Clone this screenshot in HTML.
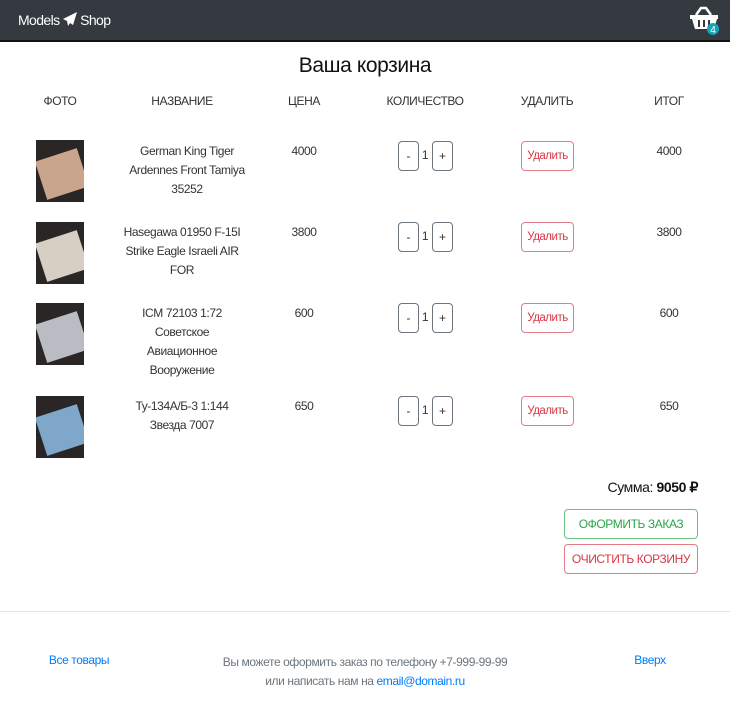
<!DOCTYPE html>
<html><head><meta charset="utf-8"><style>
*{margin:0;padding:0;box-sizing:border-box}
body{width:730px;height:710px;background:#fff;font-family:"Liberation Sans",sans-serif;color:#333;position:relative;overflow:hidden}
.nav{position:absolute;left:0;top:0;width:730px;height:42px;background:#343a40;border-bottom:2px solid #111}
.a{position:absolute;white-space:nowrap}
.c{transform:translateX(-50%);text-align:center}
.n{font-size:12px;letter-spacing:-0.4px}
.img{position:absolute;left:36px;width:48px;height:62px;background:#2a2626;overflow:hidden}
.img i{position:absolute;left:4px;top:14px;width:44px;height:40px;transform:rotate(-18deg);}
.qb{position:absolute;width:21px;height:30px;border:1px solid #6c757d;border-radius:4px;font-size:12px;text-align:center;line-height:28px}
.del{position:absolute;left:521px;width:53px;height:30px;border:1px solid #e07d87;border-radius:4px;color:#dc3545;font-size:11.5px;text-align:center;line-height:28px;letter-spacing:-0.5px}
.big{position:absolute;left:564px;width:134px;height:30px;border:1px solid;border-radius:4px;font-size:12px;text-align:center;line-height:28px;letter-spacing:-0.4px}
</style></head><body>
<div class="nav"></div>
<div class="a" style="left:18px;top:12px;color:#fff;font-size:14px;letter-spacing:-0.6px">Models <svg width="14" height="14" viewBox="0 0 14 14" style="vertical-align:-1px"><path d="M14 0L0 7l4 2 1 5 2-3 3 2z" fill="#fff"/></svg> Shop</div>
<svg class="a" style="left:689px;top:4px" width="32" height="32" viewBox="0 0 32 32"><path d="M7 11l5-7h5l5 7" stroke="#fff" stroke-width="2.5" fill="none"/><path d="M1 11h28v4h-1l-3 10H6L3 15H1z" fill="#fff"/><path d="M10 16v7M15 16v7M20 16v7" stroke="#343a40" stroke-width="2"/><circle cx="24" cy="25" r="6" fill="#17a2b8"/><text x="24" y="29" fill="#fff" font-size="10" text-anchor="middle" font-family="Liberation Sans">4</text></svg>
<div class="a c" style="left:365px;top:54px;font-size:21px;letter-spacing:-0.4px;color:#111">Ваша корзина</div>
<div class="a c n" style="left:60px;top:94px">ФОТО</div>
<div class="a c n" style="left:182px;top:94px">НАЗВАНИЕ</div>
<div class="a c n" style="left:304px;top:94px">ЦЕНА</div>
<div class="a c n" style="left:425px;top:94px">КОЛИЧЕСТВО</div>
<div class="a c n" style="left:547px;top:94px">УДАЛИТЬ</div>
<div class="a c n" style="left:669px;top:94px">ИТОГ</div>

<div class="img" style="top:140px"><i style="background:#c9a58e"></i></div>
<div class="img" style="top:222px"><i style="background:#d8cfc4"></i></div>
<div class="img" style="top:303px"><i style="background:#b9bcc2"></i></div>
<div class="img" style="top:396px"><i style="background:#7fa7c9"></i></div>

<div class="a c n" style="left:187px;top:142px;line-height:19px">German King Tiger<br>Ardennes Front Tamiya<br>35252</div>
<div class="a c n" style="left:182px;top:223px;line-height:19px">Hasegawa 01950 F-15I<br>Strike Eagle Israeli AIR<br>FOR</div>
<div class="a c n" style="left:182px;top:304px;line-height:19px">ICM 72103 1:72<br>Советское<br>Авиационное<br>Вооружение</div>
<div class="a c n" style="left:182px;top:397px;line-height:19px">Ту-134А/Б-3 1:144<br>Звезда 7007</div>

<div class="a c n" style="left:304px;top:144px">4000</div><div class="a c n" style="left:669px;top:144px">4000</div>
<div class="a c n" style="left:304px;top:225px">3800</div><div class="a c n" style="left:669px;top:225px">3800</div>
<div class="a c n" style="left:304px;top:306px">600</div><div class="a c n" style="left:669px;top:306px">600</div>
<div class="a c n" style="left:304px;top:399px">650</div><div class="a c n" style="left:669px;top:399px">650</div>

<div class="qb" style="left:398px;top:141px">-</div><div class="a c n" style="left:425px;top:148px">1</div><div class="qb" style="left:432px;top:141px">+</div>
<div class="qb" style="left:398px;top:222px">-</div><div class="a c n" style="left:425px;top:229px">1</div><div class="qb" style="left:432px;top:222px">+</div>
<div class="qb" style="left:398px;top:303px">-</div><div class="a c n" style="left:425px;top:310px">1</div><div class="qb" style="left:432px;top:303px">+</div>
<div class="qb" style="left:398px;top:396px">-</div><div class="a c n" style="left:425px;top:403px">1</div><div class="qb" style="left:432px;top:396px">+</div>

<div class="del" style="top:141px">Удалить</div>
<div class="del" style="top:222px">Удалить</div>
<div class="del" style="top:303px">Удалить</div>
<div class="del" style="top:396px">Удалить</div>

<div class="a" style="right:32px;top:479px;font-size:14px;letter-spacing:-0.4px;color:#111">Сумма: <b>9050 ₽</b></div>
<div class="big" style="top:509px;border-color:#6cc07f;color:#28a745">ОФОРМИТЬ ЗАКАЗ</div>
<div class="big" style="top:544px;border-color:#e07d87;color:#dc3545">ОЧИСТИТЬ КОРЗИНУ</div>

<div class="a" style="left:0;top:611px;width:730px;height:1px;background:#e3e3e3"></div>
<div class="a c n" style="left:79px;top:653px;color:#007bff">Все товары</div>
<div class="a c n" style="left:365px;top:653px;color:#6c757d;line-height:19px">Вы можете оформить заказ по телефону +7-999-99-99<br>или написать нам на <span style="color:#007bff">email@domain.ru</span></div>
<div class="a c n" style="left:650px;top:653px;color:#007bff">Вверх</div>
</body></html>
